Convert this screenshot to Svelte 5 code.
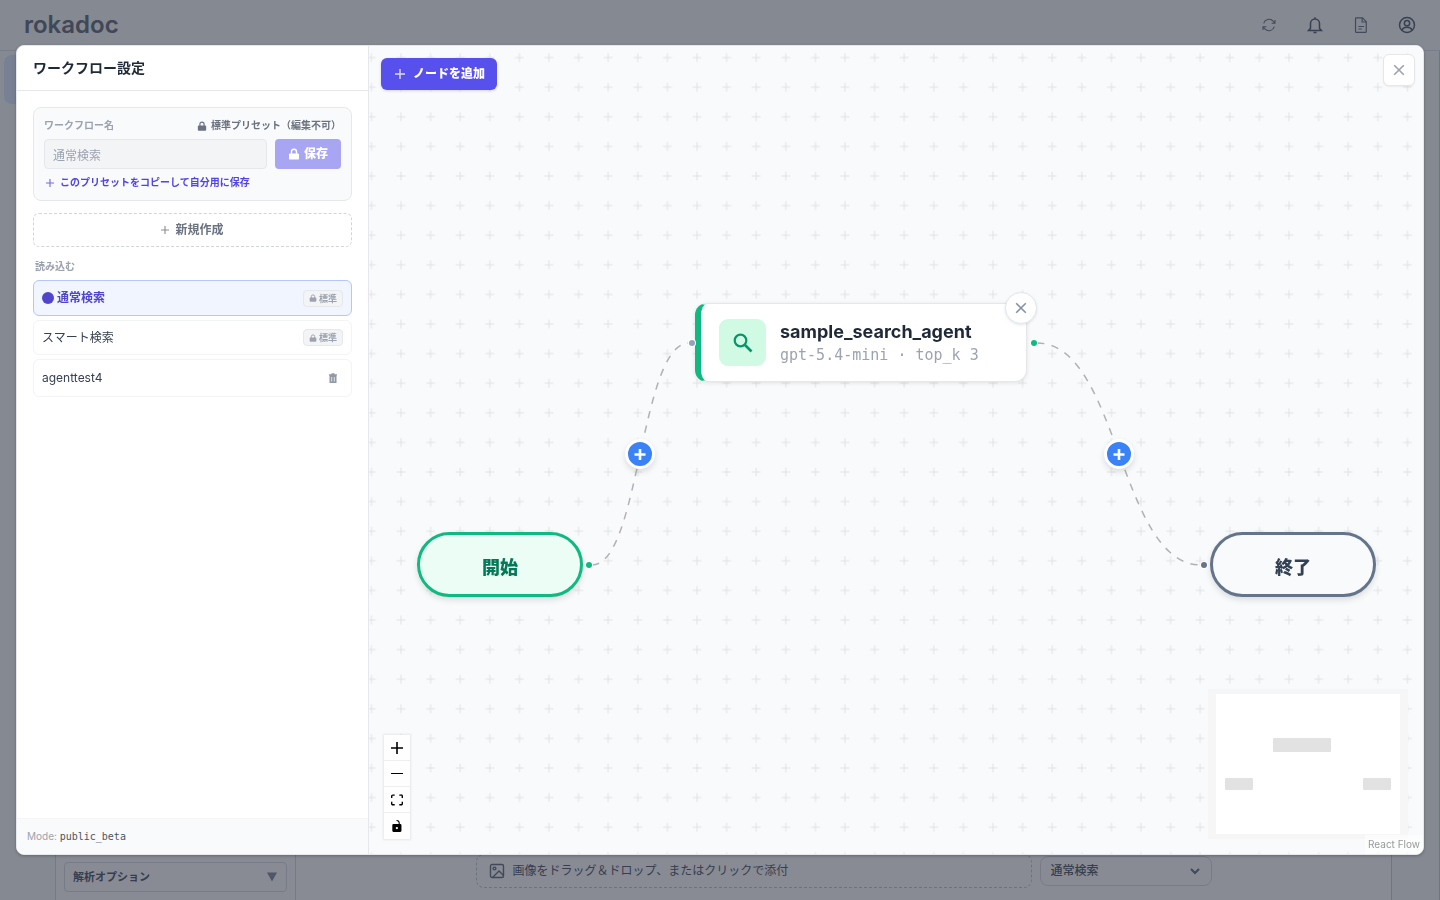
<script>
    let workflowName = $state('通常検索')
    let mode = $state('通常検索')
    let selected = $state('通常検索')

    const workflows = [
        { name: '通常検索', preset: true },
        { name: 'スマート検索', preset: true },
        { name: 'agenttest4', preset: false }
    ]

    // canvas coordinates, origin at the top left of the flow pane
    const edges = [
        { path: 'M223 519 C271 519 271 297 320 297', x: 271, y: 408 },
        { path: 'M668 297 C750 297 750 519 832 519', x: 750, y: 408 }
    ]
    const handles = [
        { x: 220, y: 519, color: '#10b981' },
        { x: 323, y: 297, color: '#94a3b8' },
        { x: 665, y: 297, color: '#10b981' },
        { x: 835, y: 519, color: '#64748b' }
    ]
</script>

{#snippet lock(size)}
    <svg width={size} height={size} viewBox="0 0 12 12" aria-hidden="true">
        <path d="M3.500 6V3.800a2.500 2.500 0 0 1 5 0V6" fill="none" stroke="currentColor" stroke-width="1.4" />
        <rect x="1" y="5.400" width="10" height="6.200" rx="1.200" fill="currentColor" />
    </svg>
{/snippet}

{#snippet plus(size)}
    <svg class="plus" width={size} height={size} viewBox="0 0 10 10" aria-hidden="true">
        <path d="M5 0v10M0 5h10" fill="none" stroke="currentColor" stroke-width="1.4" />
    </svg>
{/snippet}

{#snippet cross(size)}
    <svg width={size} height={size} viewBox="0 0 12 12" aria-hidden="true">
        <path d="M1.200 1.200l9.600 9.600M10.800 1.200l-9.600 9.600" fill="none" stroke="currentColor" stroke-width="1.600" />
    </svg>
{/snippet}

<div class="page">
    <header class="topbar">
        <h1>rokadoc</h1>
        <nav>
            <button aria-label="更新">
                <svg width="16" height="16" viewBox="0 0 24 24"><path d="M16 9.300h5V4.400M3 19.600v-5h5M4 9.600a8.300 8.300 0 0 1 13.800-3.700l3.200 3.400M3 14.700l3.200 3.400A8.300 8.300 0 0 0 20 14.400" /></svg>
            </button>
            <button aria-label="通知" class="strong">
                <svg width="18" height="18" viewBox="0 0 24 24"><path d="M12 1.500v2M6 16.500V10a6 6 0 0 1 12 0v6.500l2.500 2.700h-17zM10 22h4" /></svg>
            </button>
            <button aria-label="ドキュメント">
                <svg width="18" height="18" viewBox="0 0 24 24"><path d="M5.500 2.500h8.500l5 5V21a.8.8 0 0 1-.8.8H5.500a.8.8 0 0 1-.8-.8V3.300a.8.8 0 0 1 .8-.8zM13.500 2.800V8h5.200M8.500 14h7.500M8.500 17.300h4.500" /></svg>
            </button>
            <button aria-label="アカウント" class="strong">
                <svg width="18" height="18" viewBox="0 0 24 24"><circle cx="12" cy="12" r="10" /><circle cx="12" cy="9.500" r="3.500" /><path d="M5 18.800c1.500-2.600 4-3.800 7-3.800s5.500 1.200 7 3.800" /></svg>
            </button>
        </nav>
    </header>
    <div class="workspace">
        <div class="rail"><span class="rail-item"></span></div>
        <aside class="options">
            <button class="options-toggle"><span>解析オプション</span>
                <svg width="12" height="10" viewBox="0 0 12 10"><path d="M1 .5h10L6 9.500z" fill="currentColor" /></svg>
            </button>
        </aside>
        <main>
            <div class="composer">
                <button class="dropzone">
                    <svg width="16" height="16" viewBox="0 0 16 16"><rect x="1.500" y="1.500" width="13" height="13" rx="1.500" /><circle cx="5.500" cy="5.500" r="1.400" /><path d="M3.500 14.500l6.500-6.500 4.500 4.500" /></svg>
                    <span>画像をドラッグ＆ドロップ、またはクリックで添付</span>
                </button>
                <div class="mode">
                    <select bind:value={mode} aria-label="検索モード">
                        <option>通常検索</option>
                        <option>スマート検索</option>
                    </select>
                    <svg width="12" height="12" viewBox="0 0 12 12"><path d="M2 4l4 4 4-4" /></svg>
                </div>
            </div>
        </main>
        <div class="gutter"></div>
    </div>
</div>

<div class="overlay">
    <div class="modal" role="dialog" aria-modal="true" aria-labelledby="modal-title">
        <section class="sidebar">
            <h2 id="modal-title">ワークフロー設定</h2>
            <div class="sidebar-body">
                <div class="card">
                    <div class="card-head">
                        <label for="workflow-name">ワークフロー名</label>
                        <span class="readonly">{@render lock(10)}標準プリセット（編集不可）</span>
                    </div>
                    <div class="name-row">
                        <input id="workflow-name" type="text" bind:value={workflowName} disabled />
                        <button class="save" disabled>{@render lock(12)}保存</button>
                    </div>
                    <button class="copy">{@render plus(8)}このプリセットをコピーして自分用に保存</button>
                </div>
                <button class="create">{@render plus(8)}新規作成</button>
                <h3>読み込む</h3>
                <ul>
                    {#each workflows as flow}
                        <li class:active={flow.name === selected}>
                            <button class="flow-name" onclick={() => (selected = flow.name)}>
                                {#if flow.name === selected}<i class="dot"></i>{/if}{flow.name}
                            </button>
                            {#if flow.preset}
                                <span class="badge">{@render lock(8)}標準</span>
                            {:else}
                                <button class="delete" aria-label="削除">
                                    <svg width="10" height="10" viewBox="0 0 10 10"><path d="M3.500 1.200V.3h3v.9H9v1.300H1V1.200zM1.500 2.500h7V10h-7z" fill="#9299a6" /><path d="M3.700 4v4.500M6.300 4v4.500" stroke="#fff" stroke-width=".7" /></svg>
                                </button>
                            {/if}
                        </li>
                    {/each}
                </ul>
            </div>
            <footer>Mode: <code>public_beta</code></footer>
        </section>

        <section class="canvas">
            <svg class="flow" width="100%" height="100%" aria-hidden="true">
                <pattern id="grid" x="-12.4" y="-3.2" width="29.6" height="29.6" patternUnits="userSpaceOnUse">
                    <path d="M14.800 10.400v8.800M10.400 14.800h8.800" stroke="#e0e2e5" stroke-width="1" />
                </pattern>
                <rect width="100%" height="100%" fill="url(#grid)" />
                {#each edges as edge}
                    <path d={edge.path} fill="none" stroke="#b1b1b7" stroke-width="1.5" stroke-dasharray="7.4" />
                {/each}
            </svg>

            <div class="node terminal start">開始</div>
            <div class="node terminal end">終了</div>
            <div class="node agent">
                <span class="agent-icon">
                    <svg width="24" height="24" viewBox="0 0 24 24"><circle cx="9.500" cy="9.500" r="5.800" fill="none" stroke="currentColor" stroke-width="2.200" /><path d="M14 14l6.500 6.500" stroke="currentColor" stroke-width="2.600" /></svg>
                </span>
                <div class="agent-text">
                    <strong>sample_search_agent</strong>
                    <code>gpt-5.4-mini · top_k 3</code>
                </div>
                <button class="remove" aria-label="ノードを削除">{@render cross(12)}</button>
            </div>

            {#each handles as handle}
                <i class="handle" style="left: {handle.x}px; top: {handle.y}px; background: {handle.color}"></i>
            {/each}
            {#each edges as edge}
                <button class="insert" style="left: {edge.x}px; top: {edge.y}px" aria-label="ノードを挿入">
                    <svg width="12" height="12" viewBox="0 0 12 12"><path d="M6 1v11M.5 6.500h11" stroke="#fff" stroke-width="2.600" /></svg>
                </button>
            {/each}

            <button class="add-node">{@render plus(10)}ノードを追加</button>
            <button class="close" aria-label="閉じる">{@render cross(12)}</button>

            <div class="controls">
                <button aria-label="拡大"><svg width="12" height="12" viewBox="0 0 32 32"><path d="M32 18.133H18.133V32h-4.266V18.133H0v-4.266h13.867V0h4.266v13.867H32z" /></svg></button>
                <button aria-label="縮小"><svg width="12" height="12" viewBox="0 0 12 12"><path d="M0 5h12v1H0z" /></svg></button>
                <button aria-label="全体表示"><svg width="12" height="12" viewBox="0 0 32 30"><path d="M3.692 4.630c0-.53.4-.938.939-.938h5.215V0H4.708C2.130 0 0 2.054 0 4.630v5.216h3.692V4.630zM27.354 0h-5.200v3.692h5.170c.53 0 .984.400.984.939v5.215H32V4.631A4.624 4.624 0 0 0 27.354 0zm.954 24.830c0 .532-.400.940-.939.940h-5.215v3.768h5.215c2.577 0 4.631-2.130 4.631-4.707v-5.139h-3.692v5.139zm-23.677.940c-.531 0-.939-.400-.939-.940v-5.138H0v5.139c0 2.577 2.130 4.707 4.708 4.707h5.138V25.770H4.631z" /></svg></button>
                <button aria-label="ロック"><svg width="10" height="12" viewBox="0 0 25 32"><path d="M21.333 10.667H19.810V7.619C19.810 3.429 16.380 0 12.190 0c-4.114 1.828-1.370 2.133.305 2.438 1.676.305 4.420 2.590 4.420 5.181v3.048H3.047A3.056 3.056 0 0 0 0 13.714v15.238A3.056 3.056 0 0 0 3.048 32h18.285a3.056 3.056 0 0 0 3.048-3.048V13.714a3.056 3.056 0 0 0-3.048-3.047zM12.190 24.533a3.056 3.056 0 0 1-3.047-3.047 3.056 3.056 0 0 1 3.047-3.048 3.056 3.056 0 0 1 3.048 3.048 3.056 3.056 0 0 1-3.048 3.047z" /></svg></button>
            </div>

            <svg class="minimap" width="200" height="150" viewBox="0 0 200 150" role="img" aria-label="ミニマップ">
                <rect width="200" height="150" fill="#f6f6f6" />
                <rect x="8" y="5" width="184" height="140" fill="#fff" />
                <g fill="#e2e2e2">
                    <rect x="65" y="49" width="58" height="14" rx="1" />
                    <rect x="17" y="89" width="28" height="12" rx="1" />
                    <rect x="155" y="89" width="28" height="12" rx="1" />
                </g>
            </svg>
            <a class="attribution" href="https://reactflow.dev">React Flow</a>
        </section>
    </div>
</div>

<style>
    :global(body) {
        font-family: Inter, "Noto Sans CJK JP", sans-serif;
        font-size: 12px;
        color: #1f2937;
        overflow: hidden;
    }
    * {
        box-sizing: border-box;
    }
    h1, h2, h3, ul {
        margin: 0;
        padding: 0;
    }
    button, input, select {
        font: inherit;
        line-height: 16px;
        color: inherit;
        margin: 0;
        padding: 0;
        border: 0;
        background: none;
    }
    button {
        display: flex;
        align-items: center;
        justify-content: center;
    }
    svg {
        flex: none;
    }
    code {
        font-family: "DejaVu Sans Mono", monospace;
    }

    .page {
        display: flex;
        flex-direction: column;
        height: 100vh;
        background: #f9fafb;
        color: #5b6476;
    }
    .topbar {
        display: flex;
        align-items: center;
        justify-content: space-between;
        height: 51px;
        padding: 0 16px 0 24px;
        border-bottom: 1px solid #e0e3ea;
    }
    h1 {
        font-size: 24px;
        font-weight: 600;
        line-height: 32px;
        color: #6f7686;
    }
    nav {
        display: flex;
        gap: 12px;
    }
    nav button {
        width: 34px;
        height: 34px;
    }
    nav svg {
        fill: none;
        stroke: #747c8c;
        stroke-width: 1.6;
    }
    nav .strong svg {
        stroke: #5f687b;
        stroke-width: 2;
    }
    .workspace {
        flex: 1;
        display: flex;
    }
    .rail {
        width: 55px;
        padding: 4px;
    }
    .rail-item {
        display: block;
        height: 49px;
        border-radius: 8px;
        background: #dfeafe;
    }
    .options {
        width: 241px;
        display: flex;
        align-items: flex-end;
        padding: 8px;
        border: solid #d9dce3;
        border-width: 0 1px;
        background: #fff;
    }
    .options-toggle {
        width: 100%;
        height: 30px;
        padding: 0 8px;
        justify-content: space-between;
        border: 1px solid #dcdfe6;
        border-radius: 4px;
        font-size: 11px;
        font-weight: 600;
    }
    .options-toggle svg {
        color: #8d94a2;
    }
    main {
        flex: 1;
        display: flex;
        align-items: flex-end;
        justify-content: center;
        padding-bottom: 12px;
        background: #fff;
    }
    .composer {
        display: flex;
        align-items: center;
        gap: 8px;
        width: 736px;
    }
    .dropzone {
        flex: 1;
        height: 34px;
        padding: 0 12px;
        gap: 8px;
        justify-content: flex-start;
        border: 1px dashed #c9cdd6;
        border-radius: 8px;
    }
    .dropzone svg, .mode svg {
        fill: none;
        stroke: #707889;
        stroke-width: 1.4;
    }
    .mode {
        position: relative;
        width: 172px;
    }
    .mode select {
        appearance: none;
        width: 100%;
        height: 30px;
        padding: 0 10px;
        border: 1px solid #dcdfe6;
        border-radius: 8px;
        font-weight: 500;
    }
    .mode svg {
        position: absolute;
        right: 11px;
        top: 9px;
        stroke-width: 2;
    }
    .gutter {
        width: 49px;
        border: solid #d0d3da;
        border-width: 0 1px;
    }

    .overlay {
        position: fixed;
        inset: 0;
        display: grid;
        place-items: center;
        padding: 0 16px;
        background: rgba(17, 24, 39, 0.5);
    }
    .modal {
        display: flex;
        width: 100%;
        height: 90vh;
        overflow: hidden;
        border: 1px solid #e5e7eb;
        border-radius: 8px;
        background: #fff;
        box-shadow: 0 1px 3px rgba(0, 0, 0, 0.25);
    }
    .sidebar {
        display: flex;
        flex-direction: column;
        flex: none;
        width: 352px;
        border-right: 1px solid #e5e7eb;
    }
    h2 {
        padding: 12px 16px;
        border-bottom: 1px solid #e5e7eb;
        font-size: 14px;
        line-height: 20px;
    }
    .sidebar-body {
        flex: 1;
        padding: 16px;
    }
    .card {
        padding: 10px;
        border: 1px solid #e5e7eb;
        border-radius: 8px;
        background: #f9fafb;
    }
    .card-head {
        display: flex;
        justify-content: space-between;
        font-size: 10px;
        font-weight: 700;
        line-height: 15px;
        color: #9ca3af;
    }
    .readonly {
        display: flex;
        align-items: center;
        gap: 4px;
        color: #6b7280;
    }
    .name-row {
        display: flex;
        gap: 8px;
        margin: 6px 0;
    }
    input {
        flex: 1;
        min-width: 0;
        height: 30px;
        padding: 0 8px;
        border: 1px solid #e5e7eb;
        border-radius: 4px;
        background: #f3f4f6;
        color: #9ca3af;
    }
    .save {
        width: 66px;
        gap: 4px;
        border-radius: 4px;
        background: #a8a5f3;
        color: #fff;
        font-weight: 900;
    }
    .copy {
        gap: 6px;
        padding-left: 2px;
        font-size: 10px;
        font-weight: 700;
        line-height: 15px;
        color: #5145e5;
    }
    .plus {
        opacity: 0.8;
    }
    .create {
        width: 100%;
        height: 34px;
        gap: 6px;
        margin: 12px 0;
        border: 1px dashed #d1d5db;
        border-radius: 6px;
        font-weight: 700;
        color: #6b7280;
    }
    h3 {
        padding: 0 2px;
        margin-bottom: 6px;
        font-size: 10px;
        line-height: 15px;
        color: #9ca3af;
    }
    ul {
        display: flex;
        flex-direction: column;
        gap: 4px;
        list-style: none;
    }
    li {
        display: flex;
        align-items: center;
        justify-content: space-between;
        padding: 8px;
        border: 1px solid #f3f4f6;
        border-radius: 6px;
        color: #374151;
    }
    li.active {
        border-color: #b4c6fc;
        background: #f0f5ff;
        color: #5145cd;
        font-weight: 700;
    }
    .flow-name {
        gap: 4px;
        line-height: 16px;
    }
    .active .flow-name {
        line-height: 18px;
    }
    .dot {
        width: 12px;
        height: 12px;
        margin-right: -1px;
        border-radius: 50%;
        background: #5145cd;
    }
    .badge {
        display: flex;
        align-items: center;
        gap: 2px;
        padding: 0 5px;
        border: 1px solid #e5e7eb;
        border-radius: 4px;
        background: #f3f4f6;
        color: #9ca3af;
        font-size: 9px;
        font-weight: 700;
        line-height: 15px;
    }
    .delete {
        width: 20px;
        height: 20px;
    }
    footer {
        padding: 9px 10px;
        border-top: 1px solid #f3f4f6;
        background: #f9fafb;
        color: #9ca3af;
        font-size: 10px;
        line-height: 17px;
    }
    footer code {
        color: #4b5563;
    }

    .canvas {
        position: relative;
        flex: 1;
        overflow: hidden;
        background: #f9fafb;
    }
    .flow {
        position: absolute;
        inset: 0;
    }
    .node {
        position: absolute;
        display: flex;
        align-items: center;
    }
    .terminal {
        top: 486px;
        width: 166px;
        height: 65px;
        padding-top: 2px;
        justify-content: center;
        border: 3px solid;
        border-radius: 33px;
        box-shadow: 0 3px 6px rgba(0, 0, 0, 0.12);
        font-size: 18px;
        font-weight: 900;
    }
    .start {
        left: 48px;
        border-color: #10b981;
        background: #ecfdf5;
        color: #047857;
    }
    .end {
        left: 841px;
        border-color: #64748b;
        background: #f8fafc;
        color: #334155;
    }
    .agent {
        left: 326px;
        top: 257px;
        width: 332px;
        height: 79px;
        gap: 14px;
        padding-left: 18px;
        border: 1px solid #e5e7eb;
        border-left: 6px solid #10b981;
        border-radius: 12px;
        background: #fff;
        box-shadow: 0 1px 4px rgba(0, 0, 0, 0.1);
    }
    .agent-icon {
        display: grid;
        place-items: center;
        width: 47px;
        height: 47px;
        border-radius: 9px;
        background: #d1fae5;
        color: #059669;
    }
    .agent-text {
        display: flex;
        flex-direction: column;
    }
    .agent-text strong {
        font-size: 18px;
        line-height: 24px;
    }
    .agent-text code {
        color: #9ca3af;
        font-size: 15px;
        line-height: 22px;
    }
    .remove {
        position: absolute;
        top: -12px;
        right: -11px;
        width: 32px;
        height: 32px;
        border: 1px solid #e2e8f0;
        border-radius: 50%;
        background: #fff;
        color: #8492a8;
        box-shadow: 0 1px 3px rgba(0, 0, 0, 0.1);
    }
    .handle {
        position: absolute;
        width: 6px;
        height: 6px;
        border-radius: 50%;
        transform: translate(-50%, -50%);
        box-shadow: 0 0 0 1px #fff;
    }
    .insert {
        position: absolute;
        width: 30px;
        height: 30px;
        border: 3px solid #fff;
        border-radius: 50%;
        background: #3b82f6;
        transform: translate(-50%, -50%);
        box-shadow: 0 3px 6px rgba(0, 0, 0, 0.12);
    }
    .add-node {
        position: absolute;
        top: 12px;
        left: 12px;
        height: 32px;
        padding: 0 12px 0 14px;
        gap: 8px;
        border-radius: 6px;
        background: #5850ec;
        color: #fff;
        font-weight: 900;
        box-shadow: 0 1px 3px rgba(0, 0, 0, 0.15);
    }
    .close {
        position: absolute;
        top: 8px;
        right: 8px;
        width: 32px;
        height: 32px;
        border: 1px solid #e5e7eb;
        border-radius: 6px;
        background: #fff;
        color: #9ca3af;
        box-shadow: 0 1px 2px rgba(0, 0, 0, 0.06);
    }
    .controls {
        position: absolute;
        left: 15px;
        bottom: 15px;
        box-shadow: 0 0 2px 1px rgba(0, 0, 0, 0.08);
    }
    .controls button {
        width: 26px;
        height: 26px;
        border-bottom: 1px solid #eee;
        background: #fefefe;
    }
    .controls button:last-child {
        border-bottom: 0;
    }
    .minimap {
        position: absolute;
        right: 15px;
        bottom: 15px;
    }
    .attribution {
        position: absolute;
        right: 0;
        bottom: 0;
        padding: 2px 3px;
        background: rgba(255, 255, 255, 0.5);
        color: #999;
        font-size: 10px;
        line-height: 15px;
        text-decoration: none;
    }
</style>
